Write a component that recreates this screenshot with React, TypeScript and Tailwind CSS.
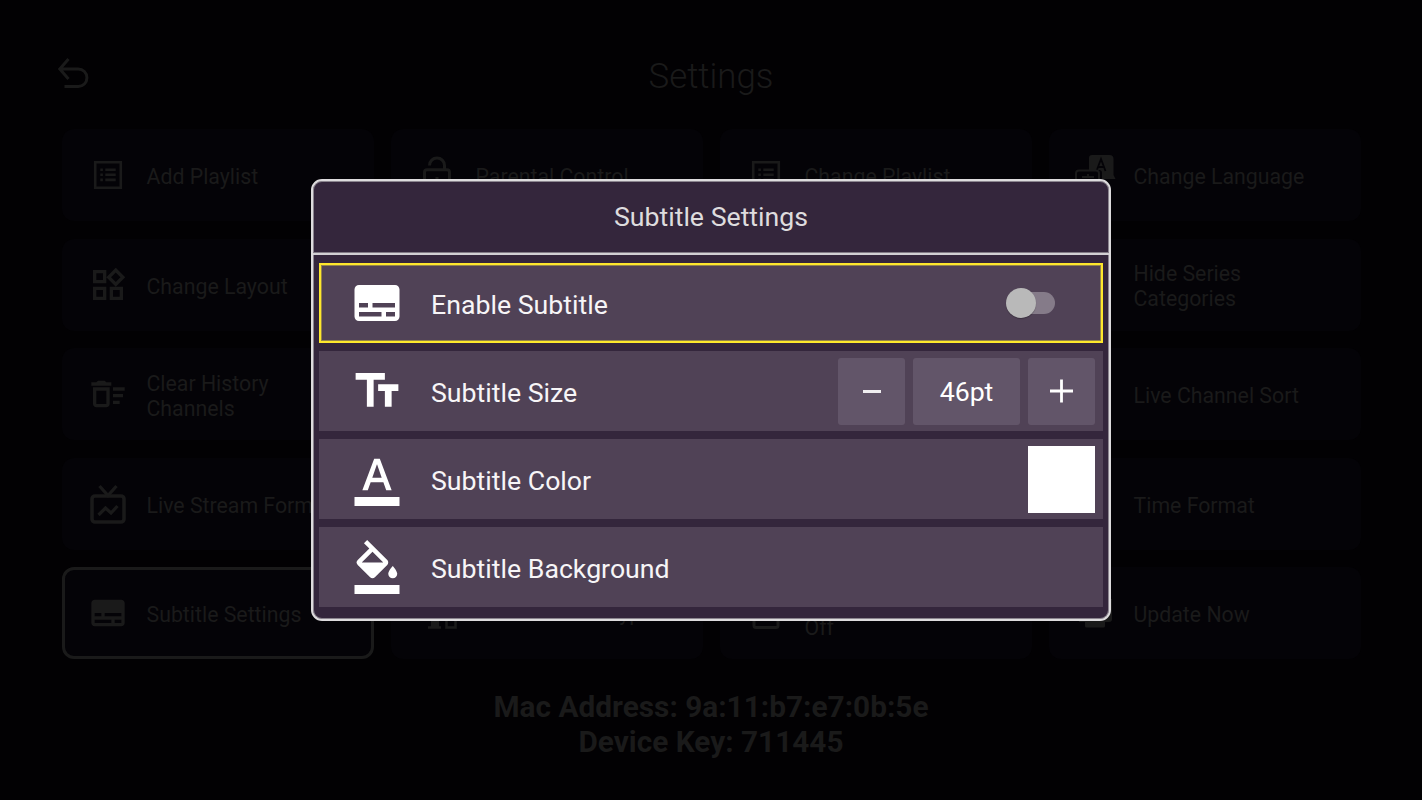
import type { ReactNode } from 'react';
import {
  MdFormatColorFill,
  MdFormatColorText,
  MdOutlineDeleteSweep,
  MdOutlineWidgets,
  MdSubtitles,
  MdTextFields
} from 'react-icons/md';

const ListIcon = () => (
  <svg viewBox="0 0 40 40" className="size-10" fill="none" stroke="currentColor" strokeWidth="2.6">
    <path d="M7.2 7.2h25.6v25.6H7.2z" />
    <path d="M12.3 14.7h2.6M12.3 19.8h2.6M12.3 24.9h2.6M17.3 14.7h10.4M17.3 19.8h10.4M17.3 24.9h10.4" />
  </svg>
);

const LockIcon = () => (
  <svg viewBox="0 0 40 40" className="size-10" fill="none" stroke="currentColor" strokeWidth="3">
    <rect x="7.5" y="14.8" width="25" height="19" rx="2.5" />
    <path d="M12.5 10.5c0-4.5 3.4-7.5 7.5-7.5s7.5 3 7.5 7.5v4M20 22v5" />
  </svg>
);

const LanguageIcon = () => (
  <svg viewBox="0 0 40 40" className="size-10 overflow-visible">
    <path d="M17 0h17.500a4 4 0 0 1 4 4v16l2 4H27v-6a3 3 0 0 0-3-3H14V3a3 3 0 0 1 3-3Z" fill="currentColor" />
    <path d="m21.500 16 4.500-12 4.500 12M23 12h6" fill="none" stroke="#040307" strokeWidth="1.800" />
    <rect x="1" y="15.500" width="23" height="20" rx="3" fill="#040307" stroke="currentColor" strokeWidth="2" />
    <path d="M7 22h12M13 19v3" fill="none" stroke="currentColor" strokeWidth="1.800" />
  </svg>
);

const TvIcon = () => (
  <svg viewBox="0 0 40 40" className="size-10" fill="none" stroke="currentColor" strokeWidth="3.600">
    <rect x="4" y="12" width="32" height="26" rx="3" />
    <path d="m11.500 2 8.500 9.500L28.500 2" strokeWidth="3.200" />
    <path d="m10.500 31 7-7 5.500 5 6.500-7" strokeWidth="3.200" />
  </svg>
);

const DevicesIcon = () => (
  <svg viewBox="0 0 40 40" className="size-10" fill="none" stroke="currentColor" strokeWidth="2.600">
    <path d="M2 9h28v17H2M11 34.500h13" />
    <path d="M14 26h8v8h-8z" fill="currentColor" stroke="none" />
    <rect x="29.500" y="17" width="9" height="17.500" />
  </svg>
);

const BoxIcon = () => (
  <svg viewBox="0 0 40 40" className="size-10" fill="none" stroke="currentColor" strokeWidth="3">
    <rect x="8" y="10" width="24" height="24.500" rx="2" />
  </svg>
);

const UpdateIcon = () => (
  <svg viewBox="0 0 40 40" className="size-10" fill="currentColor">
    <path d="M4 6h33v20a3 3 0 0 1-3 3h-4v4a1.500 1.500 0 0 1-1.500 1.500h-17A1.500 1.500 0 0 1 10 33v-4H4z" />
  </svg>
);

type Tile = { label?: string; icon?: ReactNode; active?: boolean; raised?: boolean };

const tiles: Tile[] = [
  { label: 'Add Playlist', icon: <ListIcon /> },
  { label: 'Parental Control', icon: <LockIcon /> },
  { label: 'Change Playlist', icon: <ListIcon /> },
  { label: 'Change Language', icon: <LanguageIcon /> },
  { label: 'Change Layout', icon: <MdOutlineWidgets className="size-10" /> },
  {},
  {},
  { label: 'Hide Series\nCategories' },
  { label: 'Clear History\nChannels', icon: <MdOutlineDeleteSweep className="size-10" /> },
  {},
  {},
  { label: 'Live Channel Sort' },
  { label: 'Live Stream Format', icon: <TvIcon /> },
  {},
  {},
  { label: 'Time Format' },
  { label: 'Subtitle Settings', icon: <MdSubtitles className="size-10" />, active: true },
  { label: 'Select Device Type', icon: <DevicesIcon />, raised: true },
  { label: '\nOff', icon: <BoxIcon /> },
  { label: 'Update Now', icon: <UpdateIcon /> }
];

const SettingsTile = ({ label, icon, active, raised }: Tile) => (
  <div
    className={`flex items-center rounded-xl bg-[#040307] pl-[26px] ${
      active ? 'outline-3 -outline-offset-3 outline-[#1a1a1a]' : ''
    }`}
  >
    <div className="size-10 shrink-0">{icon}</div>
    <span className={`ml-[18.500px] whitespace-pre text-[21.300px] leading-[25px] ${raised ? 'pb-0.5' : 'pt-[3px]'}`}>
      {label}
    </span>
  </div>
);

const Row = ({ icon, label, focused, children }: { icon: ReactNode; label: string; focused?: boolean; children?: ReactNode }) => (
  <div
    className={`flex h-20 items-center bg-[#504256] pl-[31px] pr-2 ${
      focused ? 'shadow-[inset_0_0_0_3px_#94844a] outline-2 -outline-offset-2 outline-[#fde72c]' : ''
    }`}
  >
    <div className="size-[54px] shrink-0 pl-[0.400px] text-white">{icon}</div>
    <span className="ml-[27px] flex-1 pt-[3px] text-[26.700px] leading-8 text-[#f7f5f7]">{label}</span>
    {children}
  </div>
);

const StepButton = ({ children }: { children: ReactNode }) => (
  <div className="flex h-[67px] w-[67px] items-center justify-center rounded-[3px] bg-[#625569]">{children}</div>
);

const SubtitleDialog = () => (
  <div className="h-[442px] w-[800px] rounded-[11px] border-2 border-[#dddbdd] bg-[#34263c] shadow-[inset_0_0_0_1px_#8b858f]">
    <div className="flex h-[74px] items-center justify-center border-b-2 border-[#d2d0d3] text-[26.700px] text-[#dedcde] shadow-[inset_0_-1px_0_#817a85]">
      Subtitle Settings
    </div>
    <div className="flex flex-col gap-2 px-1.5 pt-2">
      <Row icon={<MdSubtitles className="size-[54px]" />} label="Enable Subtitle" focused>
        <div className="relative mr-10 h-[30px] w-[49px]">
          <div className="absolute right-0 top-1 h-[22px] w-10 rounded-full bg-[#857b89]" />
          <div className="absolute left-0 top-0 size-[30px] rounded-full bg-[#b9b9b9] shadow-[0_1px_1px_rgba(0,0,0,0.25)]" />
        </div>
      </Row>
      <Row icon={<MdTextFields className="size-[54px]" />} label="Subtitle Size">
        <div className="flex gap-2">
          <StepButton>
            <div className="h-[3px] w-[18px] bg-[#f0eef0]" />
          </StepButton>
          <div className="flex h-[67px] w-[107px] items-center justify-center rounded-[3px] bg-[#625569] pt-[3px] text-[26.700px] text-white">
            46pt
          </div>
          <StepButton>
            <svg viewBox="0 0 24 24" className="size-6" stroke="#fff" strokeWidth="2.800">
              <path d="M0 12h23M11.500 0.500v23" />
            </svg>
          </StepButton>
        </div>
      </Row>
      <Row icon={<MdFormatColorText className="size-[54px]" />} label="Subtitle Color">
        <div className="size-[67px] bg-white" />
      </Row>
      <Row icon={<MdFormatColorFill className="size-[54px]" />} label="Subtitle Background" />
    </div>
  </div>
);

const App = () => (
  <div className="relative h-[800px] w-[1422px] overflow-hidden bg-[#020103] font-['Roboto',sans-serif] text-[#1a1a1a]">
    <header className="relative flex h-[129px] items-start justify-center pt-[53px]">
      <svg viewBox="0 0 32 32" className="absolute left-[57px] top-[57px] size-8" fill="none" stroke="currentColor" strokeWidth="3">
        <path d="M11.500 2 2.800 12l8.700 10M2.800 12h18.400a8.750 8.750 0 0 1 0 17.500H7.500" />
      </svg>
      <h1 className="text-[34.800px] font-light leading-[46px]">Settings</h1>
    </header>

    <main className="ml-[62px] grid w-[1299px] auto-rows-[92px] grid-cols-4 gap-x-[17px] gap-y-[17.600px]">
      {tiles.map((tile, i) => (
        <SettingsTile key={i} {...tile} />
      ))}
    </main>

    <footer className="mt-[30px] text-center text-[29.800px] font-bold leading-[35px]">
      <p>Mac Address: 9a:11:b7:e7:0b:5e</p>
      <p>Device Key: 711445</p>
    </footer>

    <div className="absolute inset-0 flex items-center justify-center">
      <SubtitleDialog />
    </div>
  </div>
);

export default App;
